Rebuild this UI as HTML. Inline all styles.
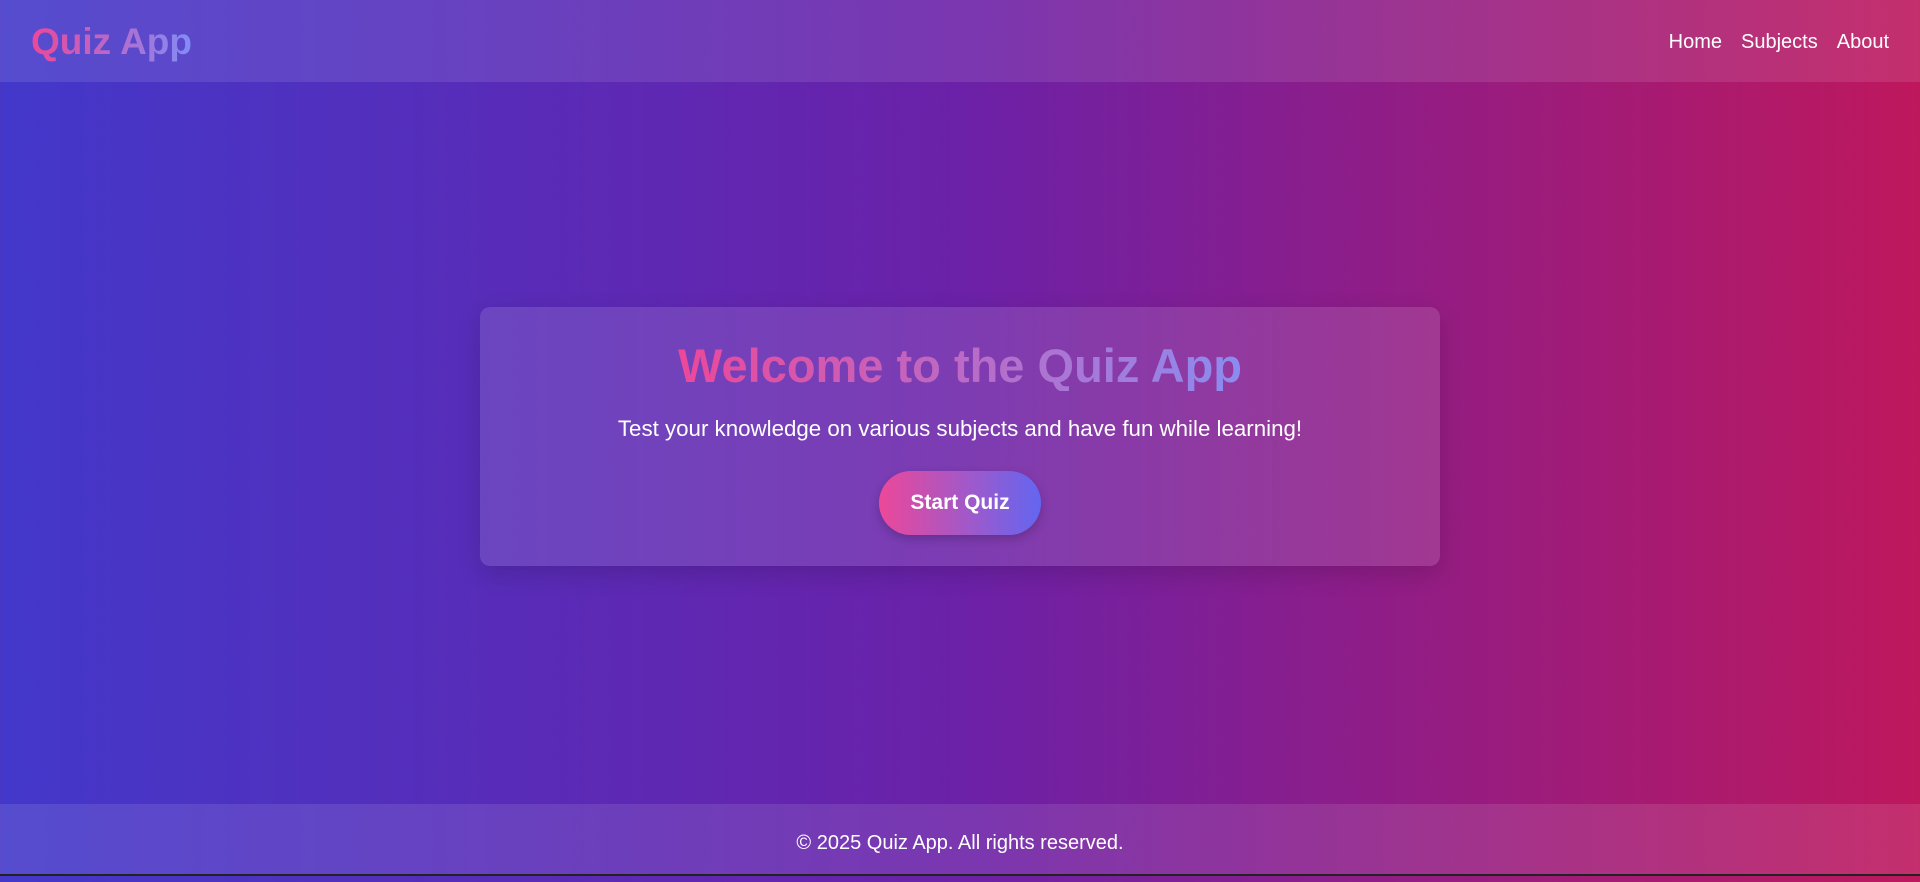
<!DOCTYPE html>
<html><head><style>
*{margin:0;padding:0;box-sizing:border-box}
body{width:1920px;height:876px;overflow:hidden;font-family:"Liberation Sans",sans-serif;background:linear-gradient(90deg,#4338ca 0%,#6b21a8 50%,#be185d 100%);color:#fff;position:relative}
header{position:absolute;top:0;left:0;right:0;height:82px;background:rgba(255,255,255,0.1);display:flex;align-items:center;justify-content:space-between;padding:2px 31px 0}
.logo{font-size:37px;font-weight:bold;background:linear-gradient(90deg,#ec4899,#818cf8);-webkit-background-clip:text;background-clip:text;color:transparent}
nav a{color:#fff;text-decoration:none;font-size:20px;margin-left:19px}
.card{position:absolute;left:480px;top:307px;width:960px;height:259px;background:rgba(255,255,255,0.12);border-radius:10px;box-shadow:0 8px 24px rgba(0,0,0,0.15);text-align:center}
h1{margin-top:34px;font-size:47px;font-weight:bold;display:inline-block;background:linear-gradient(90deg,#ec4899,#8b8cf0);-webkit-background-clip:text;background-clip:text;color:transparent;line-height:50px}
p.sub{font-size:22.3px;margin-top:25px}
.btn{display:inline-block;margin-top:29px;width:162px;height:64px;line-height:64px;border-radius:32px;background:linear-gradient(90deg,#ec4899,#6366f1);font-size:21px;font-weight:bold;box-shadow:0 4px 10px rgba(0,0,0,0.2)}
footer{position:absolute;left:0;right:0;top:804px;height:70px;background:rgba(255,255,255,0.1);text-align:center;line-height:78px;font-size:20px}
.line{position:absolute;left:0;right:0;bottom:0;height:2px;background:#222}
</style></head><body>
<header><div class="logo">Quiz App</div><nav><a>Home</a><a>Subjects</a><a>About</a></nav></header>
<div class="card"><h1>Welcome to the Quiz App</h1><p class="sub">Test your knowledge on various subjects and have fun while learning!</p><div class="btn">Start Quiz</div></div>
<footer>© 2025 Quiz App. All rights reserved.</footer>
<div class="line"></div>
</body></html>
